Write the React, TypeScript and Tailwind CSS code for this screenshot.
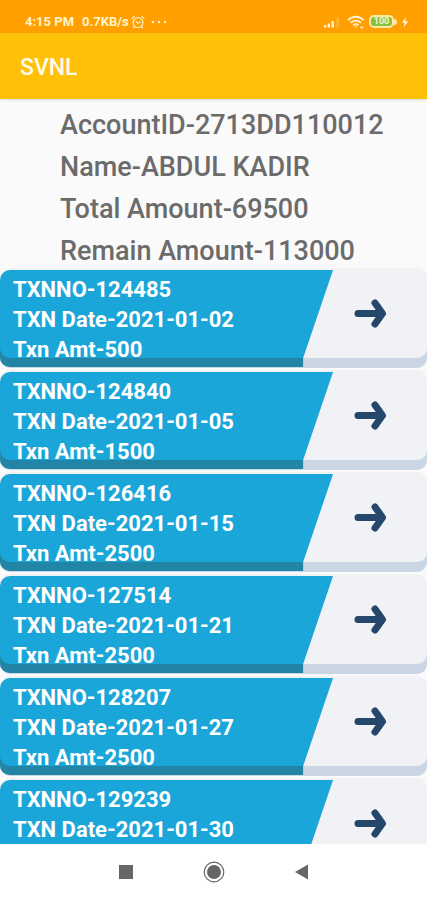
interface Transaction {
  txnNo: string;
  date: string;
  amount?: string;
}

const account = [
  { label: "AccountID", value: "2713DD110012" },
  { label: "Name", value: "ABDUL KADIR" },
  { label: "Total Amount", value: "69500" },
  { label: "Remain Amount", value: "113000" },
];

const transactions: Transaction[] = [
  { txnNo: "124485", date: "2021-01-02", amount: "500" },
  { txnNo: "124840", date: "2021-01-05", amount: "1500" },
  { txnNo: "126416", date: "2021-01-15", amount: "2500" },
  { txnNo: "127514", date: "2021-01-21", amount: "2500" },
  { txnNo: "128207", date: "2021-01-27", amount: "2500" },
  { txnNo: "129239", date: "2021-01-30" },
];

function AlarmIcon() {
  return (
    <svg width="14" height="14" viewBox="0 0 14 14" fill="none" stroke="currentColor" strokeWidth="1.2" strokeLinecap="round">
      <circle cx="7" cy="7.6" r="4.9" />
      <path d="M1 3.4 3.2 1.4M13 3.4 10.8 1.4M5 6.6 7 8.4 9.2 6.8M3.4 11.6 2.4 12.8M10.6 11.6 11.6 12.8" />
    </svg>
  );
}

function SignalIcon() {
  return (
    <svg width="17" height="12" viewBox="0 0 17 12" fill="currentColor">
      <rect x="0" y="9" width="2.4" height="2.5" rx="0.6" />
      <rect x="3.6" y="7.5" width="2.4" height="4" rx="0.6" />
      <rect x="7.4" y="5" width="2.6" height="6.5" rx="0.6" />
      <rect x="12.4" y="1.5" width="2.6" height="10" rx="0.6" opacity="0.25" />
    </svg>
  );
}

function WifiIcon() {
  return (
    <svg width="18" height="14" viewBox="0 0 18 14" fill="none" stroke="currentColor" strokeWidth="1.8">
      <path d="M1 5.2C5.4.6 12.2.6 16.6 5.2" />
      <path d="M3.6 7.8c3-3 7.4-3 10.4 0" />
      <path d="M6.2 10.3c1.6-1.6 3.6-1.6 5.2 0" />
      <path d="M7.4 11h2.8l-1.4 1.8z" fill="currentColor" stroke="none" />
      <path d="M13.2 12.4h3" strokeWidth="1.6" />
    </svg>
  );
}

function BatteryIcon() {
  return (
    <span className="flex items-center">
      <span className="flex h-[13px] w-[25px] items-center justify-center rounded-[5px] bg-[#ffe9a8] p-0.5">
        <span className="flex h-full w-full items-center justify-center rounded-[3px] bg-[#84c341] text-[9px] leading-none font-bold text-[#fff3c4]">
          100
        </span>
      </span>
      <span className="h-1.5 w-[3px] rounded-r-sm bg-[#ffe9a8]" />
    </span>
  );
}

function BoltIcon() {
  return (
    <svg width="8" height="12" viewBox="0 0 8 12" fill="currentColor">
      <path d="M5 .8.8 6.8h2.6L2.6 11.4 7.2 5.2H4.4z" />
    </svg>
  );
}

function ArrowIcon() {
  return (
    <svg
      width="34"
      height="32"
      viewBox="0 0 34 32"
      fill="none"
      stroke="#25476b"
      strokeWidth="7"
      strokeLinecap="round"
      strokeLinejoin="round"
    >
      <path d="M5 16.5H27M22 6 29.5 16.5 22 27" />
    </svg>
  );
}

function StatusBar() {
  return (
    <div className="flex h-[33px] shrink-0 items-center justify-between bg-[#ffa000] pt-2.5 pr-[18px] pl-[25px] text-[13px] font-bold text-[#fff3d0]">
      <div className="flex items-center">
        <span>4:15 PM</span>
        <span className="ml-2">0.7KB/s</span>
        <span className="ml-0.5">
          <AlarmIcon />
        </span>
        <svg className="ml-1.5" width="16" height="4" viewBox="0 0 16 4" fill="currentColor">
          <circle cx="2" cy="2" r="1.2" />
          <circle cx="8" cy="2" r="1.2" />
          <circle cx="14" cy="2" r="1.2" />
        </svg>
      </div>
      <div className="flex items-center">
        <SignalIcon />
        <span className="mr-1 ml-1.5">
          <WifiIcon />
        </span>
        <BatteryIcon />
        <span className="ml-1">
          <BoltIcon />
        </span>
      </div>
    </div>
  );
}

function TransactionCard({ txn }: { txn: Transaction }) {
  return (
    <button
      type="button"
      className="flex h-[100px] w-full items-start rounded-[10px] bg-[#f0f2f6] text-left shadow-[inset_0_-10px_0_#cbd6e5]"
    >
      <span className="mt-0.5 flex h-[97px] w-[78%] flex-col rounded-l-[10px] bg-[#1ba6d9] pt-[5px] pl-[13px] text-[22px] leading-[30px] font-bold text-white shadow-[inset_0_-9px_0_#2385a6] [clip-path:polygon(0_0,100%_0,91%_91%,91%_100%,0_100%)]">
        <span>TXNNO-{txn.txnNo}</span>
        <span>TXN Date-{txn.date}</span>
        {txn.amount && <span>Txn Amt-{txn.amount}</span>}
      </span>
      <span className="flex h-[90px] flex-1 items-center pl-5">
        <ArrowIcon />
      </span>
    </button>
  );
}

function NavigationBar() {
  return (
    <nav className="flex h-14 shrink-0 items-center justify-center gap-[66px] bg-white">
      <button type="button" aria-label="Recent apps" className="flex w-[22px] justify-center">
        <span className="size-3.5 bg-[#666666]" />
      </button>
      <button type="button" aria-label="Home">
        <svg width="22" height="22" viewBox="0 0 22 22">
          <circle cx="11" cy="11" r="9.8" fill="none" stroke="#666666" strokeWidth="1.2" />
          <circle cx="11" cy="11" r="7" fill="#666666" />
        </svg>
      </button>
      <button type="button" aria-label="Back" className="flex w-[22px] justify-center">
        <svg width="14" height="16" viewBox="0 0 14 16" fill="#666666">
          <path d="M13 .5v15L0 8z" />
        </svg>
      </button>
    </nav>
  );
}

export default function App() {
  return (
    <div className="flex h-screen flex-col bg-[#fafafa] font-[Roboto,sans-serif]">
      <StatusBar />
      <header className="z-10 flex h-[66px] shrink-0 items-center bg-[#ffc107] px-5 pt-1 shadow-sm">
        <h1 className="text-[23px] font-medium text-[#fffbea]">SVNL</h1>
      </header>
      <main className="flex min-h-0 flex-1 flex-col">
        <section className="pt-[5px] pl-[60px] text-[27px] leading-[42px] font-medium text-[#6b6b6b]">
          {account.map((row) => (
            <p key={row.label}>
              {row.label}-{row.value}
            </p>
          ))}
        </section>
        <ul className="-mt-1 flex min-h-0 flex-1 flex-col gap-0.5 overflow-y-auto [scrollbar-width:none]">
          {transactions.map((txn) => (
            <li key={txn.txnNo} className="shrink-0">
              <TransactionCard txn={txn} />
            </li>
          ))}
        </ul>
      </main>
      <NavigationBar />
    </div>
  );
}
